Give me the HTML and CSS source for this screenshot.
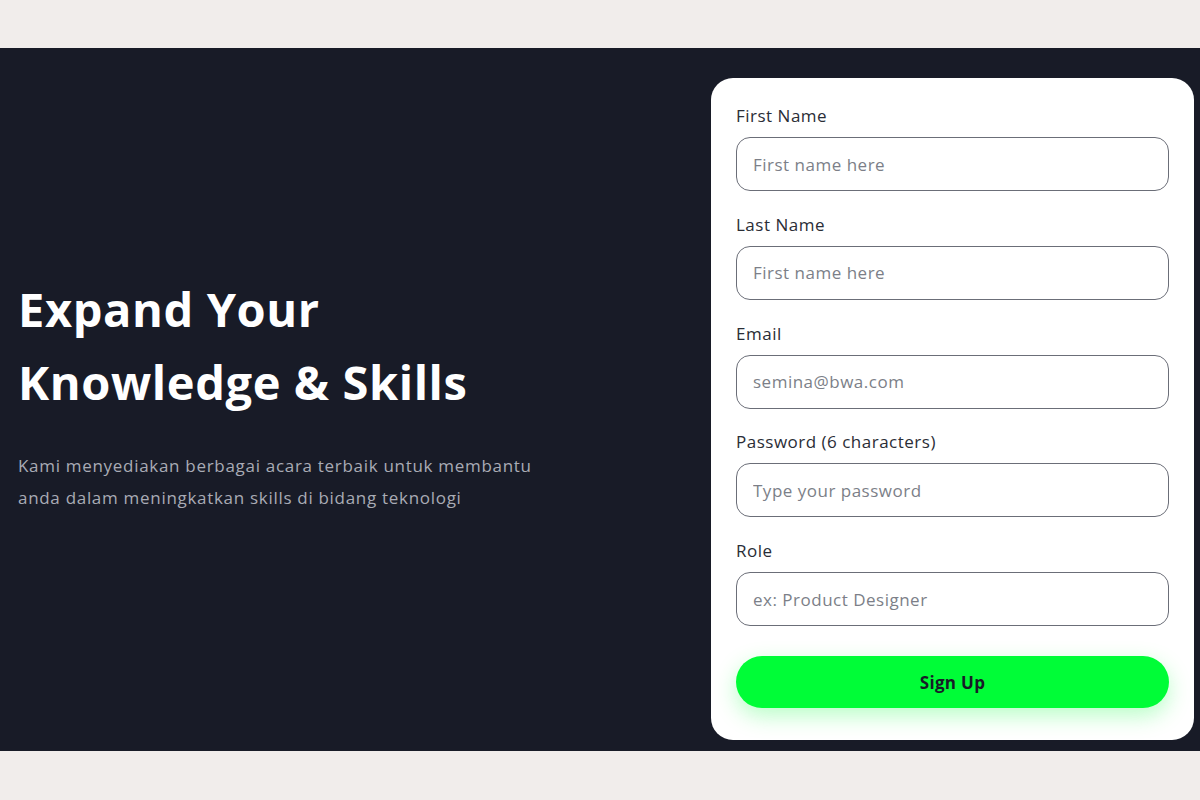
FILE: index.html
```html
<!DOCTYPE html>
<html lang="id">
<head>
<meta charset="utf-8">
<title>Sign Up</title>
<link rel="stylesheet" href="styles.css">
</head>
<body>
<div class="top-space"></div>
<section class="hero">
  <div class="intro">
    <h1 class="title">Expand Your<br>Knowledge &amp; Skills</h1>
    <p class="lead">Kami menyediakan berbagai acara terbaik untuk membantu<br>anda dalam meningkatkan skills di bidang teknologi</p>
  </div>
  <form class="card">
    <div class="field">
      <label class="label">First Name</label>
      <input class="input" type="text" placeholder="First name here">
    </div>
    <div class="field">
      <label class="label">Last Name</label>
      <input class="input" type="text" placeholder="First name here">
    </div>
    <div class="field">
      <label class="label">Email</label>
      <input class="input" type="email" placeholder="semina@bwa.com">
    </div>
    <div class="field">
      <label class="label">Password (6 characters)</label>
      <input class="input" type="password" placeholder="Type your password">
    </div>
    <div class="field">
      <label class="label">Role</label>
      <input class="input" type="text" placeholder="ex: Product Designer">
    </div>
    <button class="btn" type="button">Sign Up</button>
  </form>
</section>
<div class="bottom-space"></div>
</body>
</html>
```

FILE: styles.css
```css
* { box-sizing: border-box; }
html, body { margin: 0; padding: 0; }
body {
  background: #f1edeb;
  font-family: "Open Sans", "Liberation Sans", sans-serif;
}
.top-space { height: 48px; }
.bottom-space { height: 49px; }
.hero {
  height: 703px;
  background: #181b27;
  display: flex;
  justify-content: space-between;
  align-items: flex-start;
  padding: 30px 6px 0 18px;
}
.intro {
  align-self: center;
  padding-bottom: 42px;
}
.title {
  margin: 0;
  color: #ffffff;
  font-size: 47px;
  font-weight: 700;
  line-height: 73px;
  letter-spacing: 0.6px;
}
.lead {
  margin: 31px 0 0;
  color: #a9abb5;
  font-size: 17px;
  line-height: 32px;
  letter-spacing: 0.7px;
}
.card {
  width: 483px;
  background: #ffffff;
  border-radius: 22px;
  padding: 26px 25px 32px;
  display: flex;
  flex-direction: column;
}
.field {
  display: flex;
  flex-direction: column;
  margin-bottom: 21.75px;
}
.field:nth-last-of-type(1) { margin-bottom: 0; }
.label {
  color: #2a2d36;
  font-size: 17px;
  line-height: 24px;
  letter-spacing: 0.5px;
  margin-bottom: 9px;
}
.input {
  height: 54px;
  border: 1px solid #6b6e78;
  border-radius: 14px;
  padding: 0 16px;
  font-family: inherit;
  font-size: 17px;
  letter-spacing: 0.5px;
  color: #2a2d36;
  background: #fff;
  outline: none;
}
.input::placeholder { color: #7c7f88; }
.btn {
  margin-top: 30px;
  height: 52px;
  border: none;
  border-radius: 26px;
  background: #00fd37;
  color: #181b27;
  font-family: inherit;
  font-size: 17px;
  font-weight: 700;
  letter-spacing: 0.3px;
  box-shadow: 0 8px 22px rgba(0, 253, 55, 0.28);
  cursor: pointer;
}
```
